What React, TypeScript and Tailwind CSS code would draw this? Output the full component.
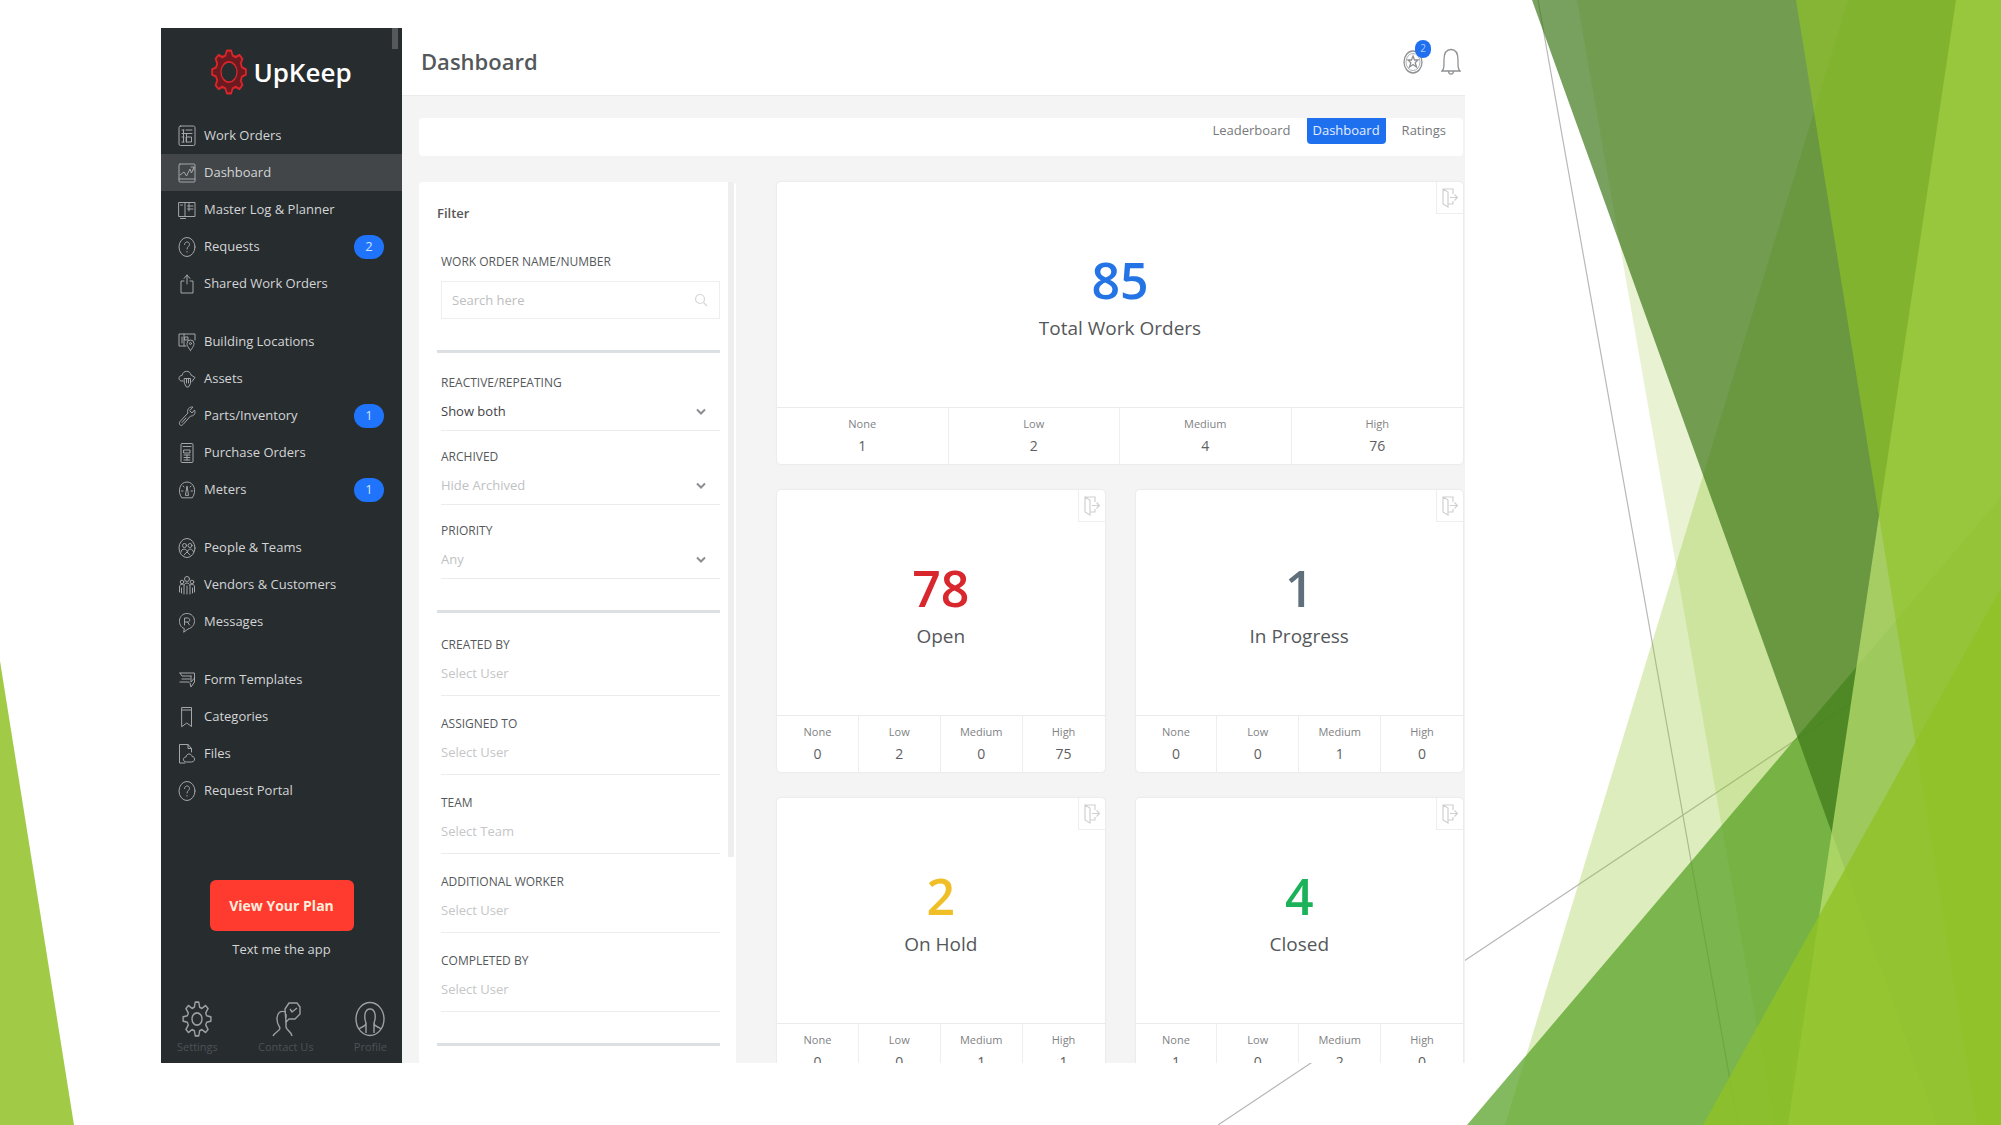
import { useId, type ReactNode } from 'react';

type NavItem = { label: string; icon: ReactNode; badge?: number; active?: boolean };

function Glyph({ children }: { children: ReactNode }) {
  return (
    <svg
      viewBox="0 0 18 22"
      className="h-[22px] w-[18px] shrink-0"
      fill="none"
      stroke="currentColor"
      strokeWidth="1"
      strokeLinecap="round"
      strokeLinejoin="round"
      aria-hidden="true"
    >
      {children}
    </svg>
  );
}

const question = (
  <Glyph>
    <ellipse cx="9" cy="11" rx="8" ry="9.5" />
    <path d="M6.5 8.5C6.5 5 11.5 5 11.5 8.5C11.5 10.5 9 10.5 9 13M9 15.5v.6" />
  </Glyph>
);

const navGroups: NavItem[][] = [
  [
    {
      label: 'Work Orders',
      icon: (
        <Glyph>
          <rect x="1" y="1" width="16" height="19.5" rx="1.5" />
          <path d="M4 5h2M8 5h6M4 8.500h10M5.500 5v12M4 12h2M4 17h2M8.500 12h5v5h-5zM8.500 8.500V17" />
        </Glyph>
      ),
    },
    {
      label: 'Dashboard',
      active: true,
      icon: (
        <Glyph>
          <rect x="1" y="2" width="16" height="18" rx="1" />
          <path d="M1 17h16M2 13l4-3 2.500 4L12 7l1.500 4L16 5M13 5h3v3" />
        </Glyph>
      ),
    },
    {
      label: 'Master Log & Planner',
      icon: (
        <Glyph>
          <path d="M1 3.500h16v14H1zM7 3.500v14M9.500 7H15M9.500 10H15M11 3.500V12M2.500 6h2M2.500 19.500h5" />
        </Glyph>
      ),
    },
    { label: 'Requests', badge: 2, icon: question },
    {
      label: 'Shared Work Orders',
      icon: (
        <Glyph>
          <path d="M6 8H3v12h12V8h-3M9 11V2M6 5.500L9 2l3 3.500" />
        </Glyph>
      ),
    },
  ],
  [
    {
      label: 'Building Locations',
      icon: (
        <Glyph>
          <path d="M8 15H1V3h16v6M4 6v6M7 6h3v3H7zM6 3v12" />
          <path d="M12.500 19.500C9 15 9 13.500 9 12.500a3.500 3.500 0 0 1 7 0c0 1 0 2.500-3.500 7z" />
          <circle cx="12.500" cy="12.500" r="1" />
        </Glyph>
      ),
    },
    {
      label: 'Assets',
      icon: (
        <Glyph>
          <path d="M5 13H4C0 13 0 7.500 4 7.500C5 2 12 2 13 7l4 2.500-3 4" />
          <path d="M6.500 10.500h6v5l-2 3.500h-2l-2-3.500zM8.500 11v4M10.500 11v4" />
        </Glyph>
      ),
    },
    {
      label: 'Parts/Inventory',
      badge: 1,
      icon: (
        <Glyph>
          <path d="M14.500 2C11 1.500 8.500 5 10 8l-8 8.500c-2 2.500 1 5.500 3 3L12.500 11C16 11.500 18 8 16.500 5L14 8l-2-2z" />
          <path d="M4 17.500l4-4.500" />
        </Glyph>
      ),
    },
    {
      label: 'Purchase Orders',
      icon: (
        <Glyph>
          <rect x="3" y="1.500" width="12" height="19" rx="1" />
          <path d="M5 4.500h8M6 8h6v3H6zM6 13h6M6 15.500h6M6 18h6M9 13v5" />
        </Glyph>
      ),
    },
    {
      label: 'Meters',
      badge: 1,
      icon: (
        <Glyph>
          <path d="M3.500 18.500C-1 12 2 3 9 3s10 9 5.500 15.500z" />
          <path d="M7.500 16L9 7l1.500 9zM3.500 12H5M13 12h1.500M5 7l1 1M13 7l-1 1" />
        </Glyph>
      ),
    },
  ],
  [
    {
      label: 'People & Teams',
      icon: (
        <Glyph>
          <ellipse cx="9" cy="11" rx="8" ry="9.500" />
          <circle cx="6.500" cy="8.500" r="2" />
          <circle cx="12" cy="8.500" r="2" />
          <path d="M3 15c0-4 6-4 6.500 0M9.500 15c0-4 5.500-4 6 0M6 18l3-3 3 3" />
        </Glyph>
      ),
    },
    {
      label: 'Vendors & Customers',
      icon: (
        <Glyph>
          <circle cx="9" cy="5" r="2.500" />
          <circle cx="4" cy="8" r="1.800" />
          <circle cx="14" cy="8" r="1.800" />
          <path d="M6 20v-8c0-4 6-4 6 0v8M1.500 18v-5c0-3 3-3 4.500-2M16.500 18v-5c0-3-3-3-4.500-2M9 12v8M3.500 14v5M14.500 14v5" />
        </Glyph>
      ),
    },
    {
      label: 'Messages',
      icon: (
        <Glyph>
          <path d="M6 17.500C-1 15 0 2.500 9 2.500s10.500 13 1 15.500L6 21z" />
          <path d="M6.500 14V7h3c3 0 3 4 0 4h-3M9.500 11l2 3" />
        </Glyph>
      ),
    },
  ],
  [
    {
      label: 'Form Templates',
      icon: (
        <Glyph>
          <path d="M2 4h14.500v9L13 18l-1-4M2 4l2 3h9M4 10h8M2 13h9M13 7v6l3.500-4" />
        </Glyph>
      ),
    },
    {
      label: 'Categories',
      icon: (
        <Glyph>
          <path d="M4 1.500h9.500v19l-4.750-3.500L4 20.500zM4 4h9.500" />
        </Glyph>
      ),
    },
    {
      label: 'Files',
      icon: (
        <Glyph>
          <path d="M7 20H1.500V1.500H10l3.500 4V9M10 1.500v4h3.500" />
          <path d="M8 19c-3.500 0-3.500-5 0-5 .5-4 5.500-4 6-.5 3.500 0 3.500 5.500 0 5.500z" />
        </Glyph>
      ),
    },
    { label: 'Request Portal', icon: question },
  ],
];

const facets = [
  { points: '1848,0 2001,0 2001,1125 1505,1125', fill: '#90c226', opacity: 0.3 },
  { points: '1577,0 2001,0 2001,1125 1774,1125', fill: '#90c226', opacity: 0.2 },
  { points: '2001,497 2001,1125 1467,1125', fill: '#54a021', opacity: 0.72 },
  { points: '1532,0 2001,0 2001,1125 1937,1125', fill: '#3f7819', opacity: 0.7 },
  { points: '1956,0 2001,0 2001,1125 1788,1125', fill: '#c0e474', opacity: 0.7 },
  { points: '1796,0 2001,0 2001,1125 1977,1125', fill: '#90c226', opacity: 0.65 },
  { points: '2001,588 2001,1125 1703,1125', fill: '#90c226', opacity: 0.8 },
  { points: '0,661 74,1125 0,1125', fill: '#90c226', opacity: 0.85 },
];

function Backdrop() {
  return (
    <svg
      className="absolute inset-0 h-full w-full"
      viewBox="0 0 2001 1125"
      preserveAspectRatio="none"
      aria-hidden="true"
    >
      <path d="M1538 0L1738 1125M2001 603L1218 1125" stroke="#b8b8b8" strokeWidth="1.2" />
      {facets.map(f => (
        <polygon key={f.points} points={f.points} fill={f.fill} fillOpacity={f.opacity} />
      ))}
    </svg>
  );
}

// gear outline with n teeth, centred on 0,0
function gearPath(teeth: number, outer: number, inner: number) {
  const step = (Math.PI * 2) / teeth;
  const at = (r: number, a: number) => `${(r * Math.sin(a)).toFixed(2)} ${(-r * Math.cos(a)).toFixed(2)}`;
  const parts = [...Array(teeth)].map((_, i) => {
    const a = i * step;
    return [
      at(inner, a - step * 0.34),
      at(outer, a - step * 0.16),
      at(outer, a + step * 0.16),
      at(inner, a + step * 0.34),
    ].join('L');
  });
  return `M${parts.join('L')}Z`;
}

function Logo() {
  return (
    <div className="flex items-center justify-center gap-1.5 pt-[21px]">
      <svg viewBox="-18 -23 36 46" className="h-[46px] w-9" fill="none" stroke="#d8262c" aria-hidden="true">
        <g transform="scale(1 1.270)">
          <path d={gearPath(8, 17, 13.5)} fill="#6b1a1f" strokeWidth="1.800" strokeLinejoin="round" />
          <circle r="8" fill="#272c2f" strokeWidth="1.300" />
        </g>
      </svg>
      <span className="text-[26px] leading-[46px] font-semibold text-white">UpKeep</span>
    </div>
  );
}

function Sidebar() {
  return (
    <aside className="relative flex w-[241px] shrink-0 flex-col bg-[#272c2f] text-[#d3d5d6]">
      <div className="absolute top-0 right-1 h-[21px] w-1.5 bg-[#55595c]" />
      <Logo />
      <nav className="mt-[22px] flex flex-col gap-[21px]">
        {navGroups.map((group, i) => (
          <ul key={i}>
            {group.map(item => (
              <li key={item.label}>
                <a
                  href="#"
                  className={`flex h-[37px] items-center gap-2 pr-[18px] pl-[17px] text-[13px] ${
                    item.active ? 'bg-[#424649]' : ''
                  }`}
                >
                  <span className="text-[#a4a7a9]">{item.icon}</span>
                  <span className="grow">{item.label}</span>
                  {item.badge && (
                    <span className="flex h-6 w-[30px] items-center justify-center rounded-full bg-[#1f74fb] text-[13px] text-[#cfe2ff]">
                      {item.badge}
                    </span>
                  )}
                </a>
              </li>
            ))}
          </ul>
        ))}
      </nav>
      <div className="mt-[71px] flex flex-col items-center">
        <button className="h-[51px] w-36 rounded-md bg-[#ff3b30] text-sm font-bold text-[#ffeedd]">
          View Your Plan
        </button>
        <a href="#" className="mt-2 text-[13px] leading-5">
          Text me the app
        </a>
      </div>
      <div className="mt-[42px] flex justify-between pr-[15px] pl-4 text-[#9da0a2]">
        <FooterLink label="Settings">
          <g transform="translate(15 18) scale(1 1.220)">
            <path d={gearPath(8, 14, 10)} />
            <circle r="5" />
          </g>
        </FooterLink>
        <FooterLink label="Contact Us">
          <path d="M14 8l4-6h8l3 4v7l-5 5h-6l-3 3zM19 8l2 3 5-4" />
          <path d="M15 11c-6-2-9 1-9 7 0 5 2 7 3 9 0 3-5 4-7 8M15 20v6c1 4 5 4 6 9M15 13v4" />
        </FooterLink>
        <FooterLink label="Profile">
          <ellipse cx="15" cy="18" rx="14" ry="16.500" />
          <path d="M4 28c3-3 7-2 7-6-2-5-2-14 4-14s6 9 4 14c0 4 4 3 7 6M11 22v10M19 22v10" />
        </FooterLink>
      </div>
    </aside>
  );
}

function FooterLink({ label, children }: { label: string; children: ReactNode }) {
  return (
    <a href="#" className="flex flex-col items-center">
      <svg
        viewBox="0 0 30 36"
        className="h-9 w-[30px]"
        fill="none"
        stroke="currentColor"
        strokeWidth="1.400"
        strokeLinejoin="round"
        aria-hidden="true"
      >
        {children}
      </svg>
      <span className="text-[11px] leading-5 text-[#4d5255]">{label}</span>
    </a>
  );
}

function Header() {
  return (
    <header className="flex h-[68px] shrink-0 items-center justify-between border-b border-[#ebebeb] bg-white pr-1 pl-[19px]">
      <h1 className="text-[22px] font-semibold text-[#55585a]">Dashboard</h1>
      <div className="flex items-center gap-[18px] text-[#8f9193]">
        <button className="relative" aria-label="Rewards, 2 new">
          <svg viewBox="0 0 20 24" className="h-6 w-5" fill="none" stroke="currentColor" strokeWidth="1.300">
            <ellipse cx="10" cy="12" rx="9" ry="11" />
            <ellipse cx="10" cy="12" rx="7" ry="8.500" strokeWidth="0.700" />
            <path d="M10 6l1.500 4H15l-2.800 2.800L13.500 17 10 14.500 6.500 17l1.300-4.200L5 10h3.500z" />
          </svg>
          <span className="absolute -top-2.5 -right-2 flex h-[18px] w-4 items-center justify-center rounded-full bg-[#1f6ff0] text-[10px] text-[#a8ccff]">
            2
          </span>
        </button>
        <button aria-label="Notifications">
          <svg viewBox="0 0 20 28" className="h-7 w-5" fill="none" stroke="currentColor" strokeWidth="1.300">
            <path d="M1 23c2-2 2-4 2-11C3 4 6 1.500 10 1.500S17 4 17 12c0 7 0 9 2 11zM7.500 23.500c.5 3.500 4.500 3.500 5 0" />
          </svg>
        </button>
      </div>
    </header>
  );
}

function TabBar() {
  return (
    <nav className="flex h-[38px] items-start justify-end gap-4 rounded-sm bg-white pr-[17px] text-[13px] leading-6 text-[#77797b]">
      <a href="#">Leaderboard</a>
      <a href="#" className="rounded-b bg-[#1f70ee] px-1.5 pb-0.5 text-[#e3eeff]">
        Dashboard
      </a>
      <a href="#">Ratings</a>
    </nav>
  );
}

function SelectField({ label, value, set }: { label: string; value: string; set?: boolean }) {
  const id = useId();
  return (
    <div className="ml-1 pt-4">
      <label htmlFor={id} className="block text-xs leading-5 font-medium text-[#55595c]">
        {label}
      </label>
      <div className="relative">
        <select
          id={id}
          className={`h-[38px] w-full appearance-none border-b border-[#ececec] bg-transparent text-[13px] outline-none ${
            set ? 'font-medium text-[#3f4346]' : 'text-[#bfc1c2]'
          }`}
        >
          <option>{value}</option>
        </select>
        <svg
          viewBox="0 0 10 8"
          className="pointer-events-none absolute top-[15px] right-3.5 h-2 w-2.5"
          fill="none"
          stroke="#8b8e90"
          strokeWidth="2"
          aria-hidden="true"
        >
          <path d="M1 1.500l4 4 4-4" />
        </svg>
      </div>
    </div>
  );
}

function UserField({ label, placeholder }: { label: string; placeholder: string }) {
  const id = useId();
  return (
    <div className="ml-1 pt-[18px]">
      <label htmlFor={id} className="block text-xs leading-5 font-medium text-[#55595c]">
        {label}
      </label>
      <input
        id={id}
        placeholder={placeholder}
        className="h-[41px] w-full border-b border-[#ececec] pb-1 text-[13px] outline-none placeholder:text-[#c4c6c7]"
      />
    </div>
  );
}

function Divider() {
  return <hr className="mt-[31px] mb-1 h-[3px] border-0 bg-[#dde0e3]" />;
}

function FilterPanel() {
  return (
    <section className="relative w-[317px] shrink-0 rounded-t bg-white pt-[21px] pr-4 pl-[18px]">
      <div className="absolute top-0 right-0.5 h-[675px] w-1.5 bg-[#eeeeee]" />
      <h2 className="text-[13px] leading-5 font-semibold text-[#55585a]">Filter</h2>
      <div className="mt-[29px] ml-1">
        <label htmlFor="wo-search" className="block text-xs leading-5 font-medium text-[#55595c]">
          WORK ORDER NAME/NUMBER
        </label>
        <div className="relative mt-[9px]">
          <input
            id="wo-search"
            placeholder="Search here"
            className="h-[38px] w-full border border-[#eeeeee] px-2.5 text-[13px] outline-none placeholder:text-[#bcbebf]"
          />
          <svg
            viewBox="0 0 14 14"
            className="absolute top-3 right-3 h-3.5 w-3.5"
            fill="none"
            stroke="#d5d6d7"
            strokeWidth="1.200"
            aria-hidden="true"
          >
            <circle cx="6" cy="6" r="4.500" />
            <path d="M9.500 9.500L13 13" />
          </svg>
        </div>
      </div>
      <Divider />
      <SelectField label="REACTIVE/REPEATING" value="Show both" set />
      <SelectField label="ARCHIVED" value="Hide Archived" />
      <SelectField label="PRIORITY" value="Any" />
      <Divider />
      <UserField label="CREATED BY" placeholder="Select User" />
      <UserField label="ASSIGNED TO" placeholder="Select User" />
      <UserField label="TEAM" placeholder="Select Team" />
      <UserField label="ADDITIONAL WORKER" placeholder="Select User" />
      <UserField label="COMPLETED BY" placeholder="Select User" />
      <Divider />
    </section>
  );
}

const levels = ['None', 'Low', 'Medium', 'High'];

type Stat = { title: string; total: number; color: string; counts: number[]; wide?: boolean };

const stats: Stat[] = [
  { title: 'Total Work Orders', total: 85, color: 'text-[#2474e5]', counts: [1, 2, 4, 76], wide: true },
  { title: 'Open', total: 78, color: 'text-[#d9272e]', counts: [0, 2, 0, 75] },
  { title: 'In Progress', total: 1, color: 'text-[#5f6f7b]', counts: [0, 0, 1, 0] },
  { title: 'On Hold', total: 2, color: 'text-[#f0bf27]', counts: [0, 0, 1, 1] },
  { title: 'Closed', total: 4, color: 'text-[#1cb25a]', counts: [1, 0, 2, 0] },
];

function StatCard({ stat }: { stat: Stat }) {
  return (
    <article
      className={`relative h-[282px] rounded-sm bg-white shadow-[0_0_2px_rgba(0,0,0,0.12)] ${
        stat.wide ? 'col-span-2' : ''
      }`}
    >
      <button
        aria-label={`Export ${stat.title}`}
        className="absolute top-0 right-0 flex h-8 w-[27px] items-center justify-center border-b border-l border-[#eeeeee]"
      >
        <svg viewBox="0 0 16 20" className="h-5 w-4" fill="none" stroke="#cfd0d1" strokeWidth="1.200" aria-hidden="true">
          <path d="M11 6V1H1v15l5 3V4L1 1M6 16h5v-3M8 9.500h7M12.500 6.500l3 3-3 3" />
        </svg>
      </button>
      <div className="flex h-[225px] flex-col items-center pt-[66px]">
        <strong className={`text-[50px] leading-[64px] font-semibold ${stat.color}`}>{stat.total}</strong>
        <h3 className="mt-1 text-[19px] leading-6 text-[#55585a]">{stat.title}</h3>
      </div>
      <dl className="grid h-[57px] grid-cols-4 divide-x divide-[#eeeeee] border-t border-[#eaeaea] text-center">
        {levels.map((level, i) => (
          <div key={level} className="pt-1.5">
            <dt className="text-[11px] leading-5 text-[#808284]">{level}</dt>
            <dd className="text-sm leading-6 font-medium text-[#5d6062]">{stat.counts[i]}</dd>
          </div>
        ))}
      </dl>
    </article>
  );
}

export default function App() {
  return (
    <div className="relative h-screen overflow-hidden bg-white font-['Open_Sans','Noto_Sans',sans-serif]">
      <Backdrop />
      <div className="relative pt-7 pr-[536px] pl-[161px]">
        <div className="flex h-[92vh] overflow-hidden">
          <Sidebar />
          <main className="flex min-w-0 grow flex-col bg-[#f4f4f5]">
            <Header />
            <div className="flex grow flex-col gap-[26px] pt-[22px] pr-0.5 pl-[17px]">
              <TabBar />
              <div className="flex grow gap-[41px]">
                <FilterPanel />
                <div className="grid grow grid-cols-2 content-start gap-x-[31px] gap-y-[26px]">
                  {stats.map(stat => (
                    <StatCard key={stat.title} stat={stat} />
                  ))}
                </div>
              </div>
            </div>
          </main>
        </div>
      </div>
    </div>
  );
}
